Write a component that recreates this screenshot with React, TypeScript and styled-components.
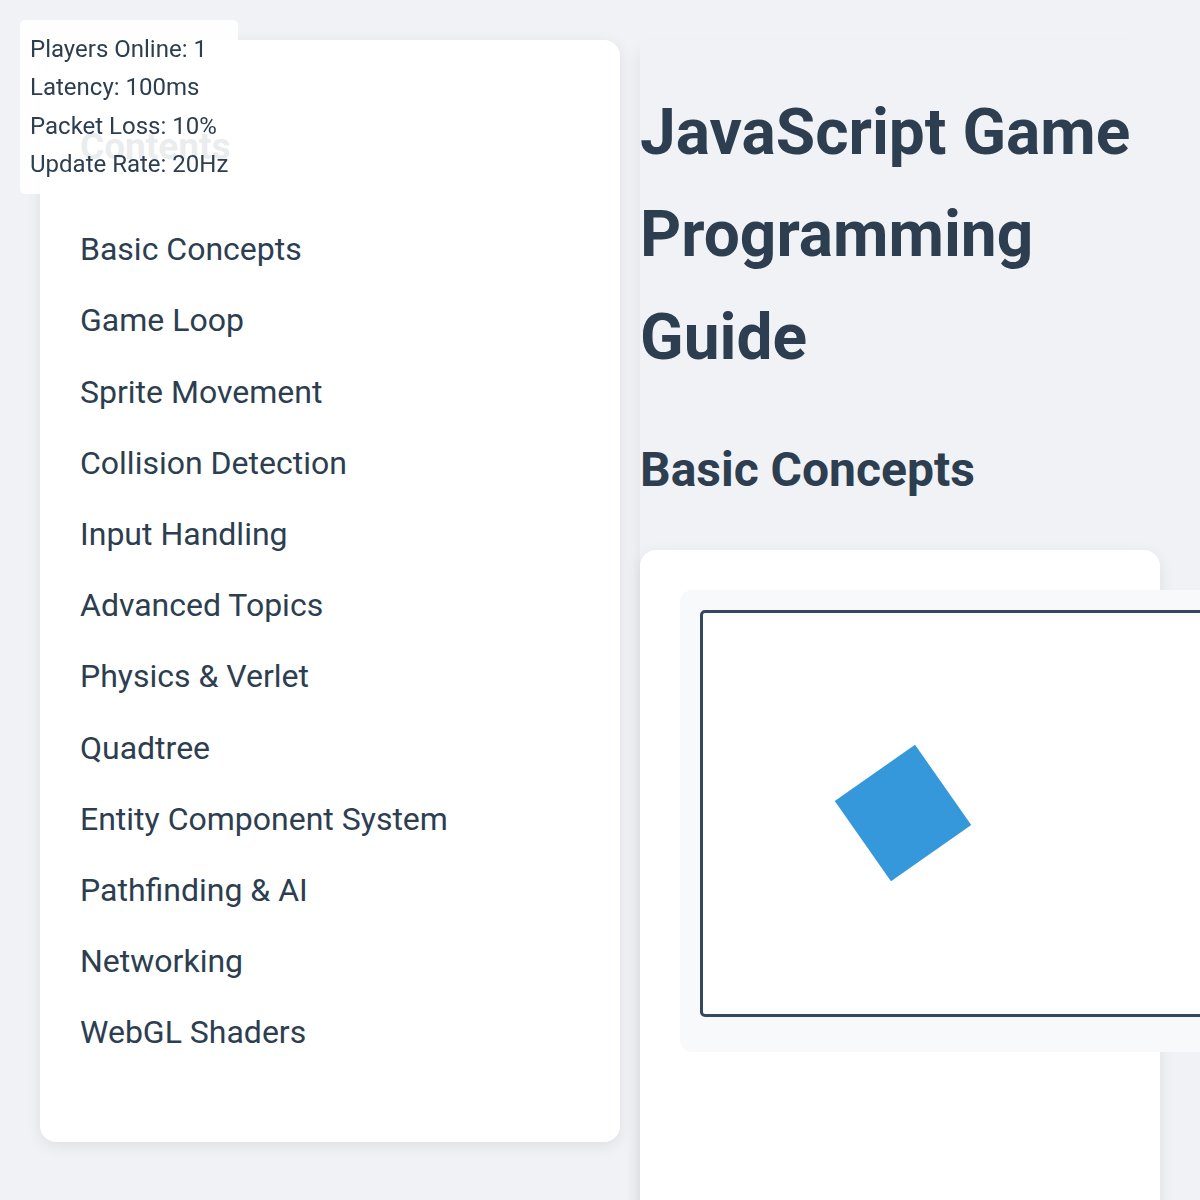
import React from "react";
import styled, { createGlobalStyle } from "styled-components";

const GlobalStyle = createGlobalStyle`
  * {
    box-sizing: border-box;
  }
  html,
  body {
    margin: 0;
    padding: 0;
    background: #f0f2f5;
    font-family: Roboto, "Liberation Sans", sans-serif;
    color: #2c3e50;
    line-height: 1.6;
    overflow: hidden;
  }
`;

const topics = [
  "Basic Concepts",
  "Game Loop",
  "Sprite Movement",
  "Collision Detection",
  "Input Handling",
  "Advanced Topics",
  "Physics & Verlet",
  "Quadtree",
  "Entity Component System",
  "Pathfinding & AI",
  "Networking",
  "WebGL Shaders",
];

const stats = [
  "Players Online: 1",
  "Latency: 100ms",
  "Packet Loss: 10%",
  "Update Rate: 20Hz",
];

const App = () => {
  return (
    <>
      <GlobalStyle />
      <Layout>
        <SideBar>
          <SideTitle>Contents</SideTitle>
          <TopicList>
            {topics.map((topic) => (
              <TopicItem key={topic}>{topic}</TopicItem>
            ))}
          </TopicList>
        </SideBar>
        <Main>
          <Title>JavaScript Game Programming Guide</Title>
          <SectionTitle>Basic Concepts</SectionTitle>
          <DemoCard>
            <CanvasBox>
              <GameCanvas>
                <svg width="800" height="400" viewBox="0 0 800 400">
                  <rect
                    x="151"
                    y="151"
                    width="98"
                    height="98"
                    fill="#3498db"
                    transform="rotate(55 200 200)"
                  />
                </svg>
              </GameCanvas>
            </CanvasBox>
          </DemoCard>
        </Main>
      </Layout>
      <NetStats>
        {stats.map((line) => (
          <StatLine key={line}>{line}</StatLine>
        ))}
      </NetStats>
    </>
  );
};

export default App;

const Layout = styled.div`
  display: grid;
  grid-template-columns: 580px 520px;
  gap: 20px;
  padding: 40px;
  align-items: start;
  min-height: 1200px;
`;

const SideBar = styled.nav`
  background: #ffffff;
  border-radius: 16px;
  padding: 40px 40px 74px;
  box-shadow: 0 4px 15px rgba(0, 0, 0, 0.08);
`;

const SideTitle = styled.h3`
  font-size: 37px;
  font-weight: 700;
  margin: 37px 0 38px;
  color: #2c3e50;
`;

const TopicList = styled.ul`
  list-style: none;
  margin: 0;
  padding: 0;
`;

const TopicItem = styled.li`
  font-size: 32px;
  line-height: 1.6;
  padding: 10px 0;
  color: #2c3e50;
`;

const Main = styled.main`
  min-height: 1160px;
  box-shadow: -12px 0 16px -10px rgba(0, 0, 0, 0.06);
`;

const Title = styled.h1`
  font-size: 64px;
  font-weight: 700;
  line-height: 1.6;
  margin: 42px 0 43px;
`;

const SectionTitle = styled.h2`
  font-size: 48px;
  font-weight: 700;
  line-height: 1.6;
  margin: 40px 0 41px;
`;

const DemoCard = styled.section`
  background: #ffffff;
  border-radius: 16px;
  padding: 40px;
  min-height: 700px;
  box-shadow: 0 4px 15px rgba(0, 0, 0, 0.08);
`;

const CanvasBox = styled.div`
  width: 846px;
  background: #f8f9fa;
  border-radius: 12px;
  padding: 20px 20px 35px;
`;

const GameCanvas = styled.div`
  width: 806px;
  height: 407px;
  border: 3px solid #34495e;
  border-radius: 5px;
  background: #ffffff;
  overflow: hidden;

  svg {
    display: block;
  }
`;

const NetStats = styled.div`
  position: fixed;
  top: 20px;
  left: 20px;
  padding: 10px;
  border-radius: 5px;
  background: rgba(255, 255, 255, 0.9);
`;

const StatLine = styled.div`
  font-size: 24px;
  line-height: 1.6;
  color: #2c3e50;
`;
